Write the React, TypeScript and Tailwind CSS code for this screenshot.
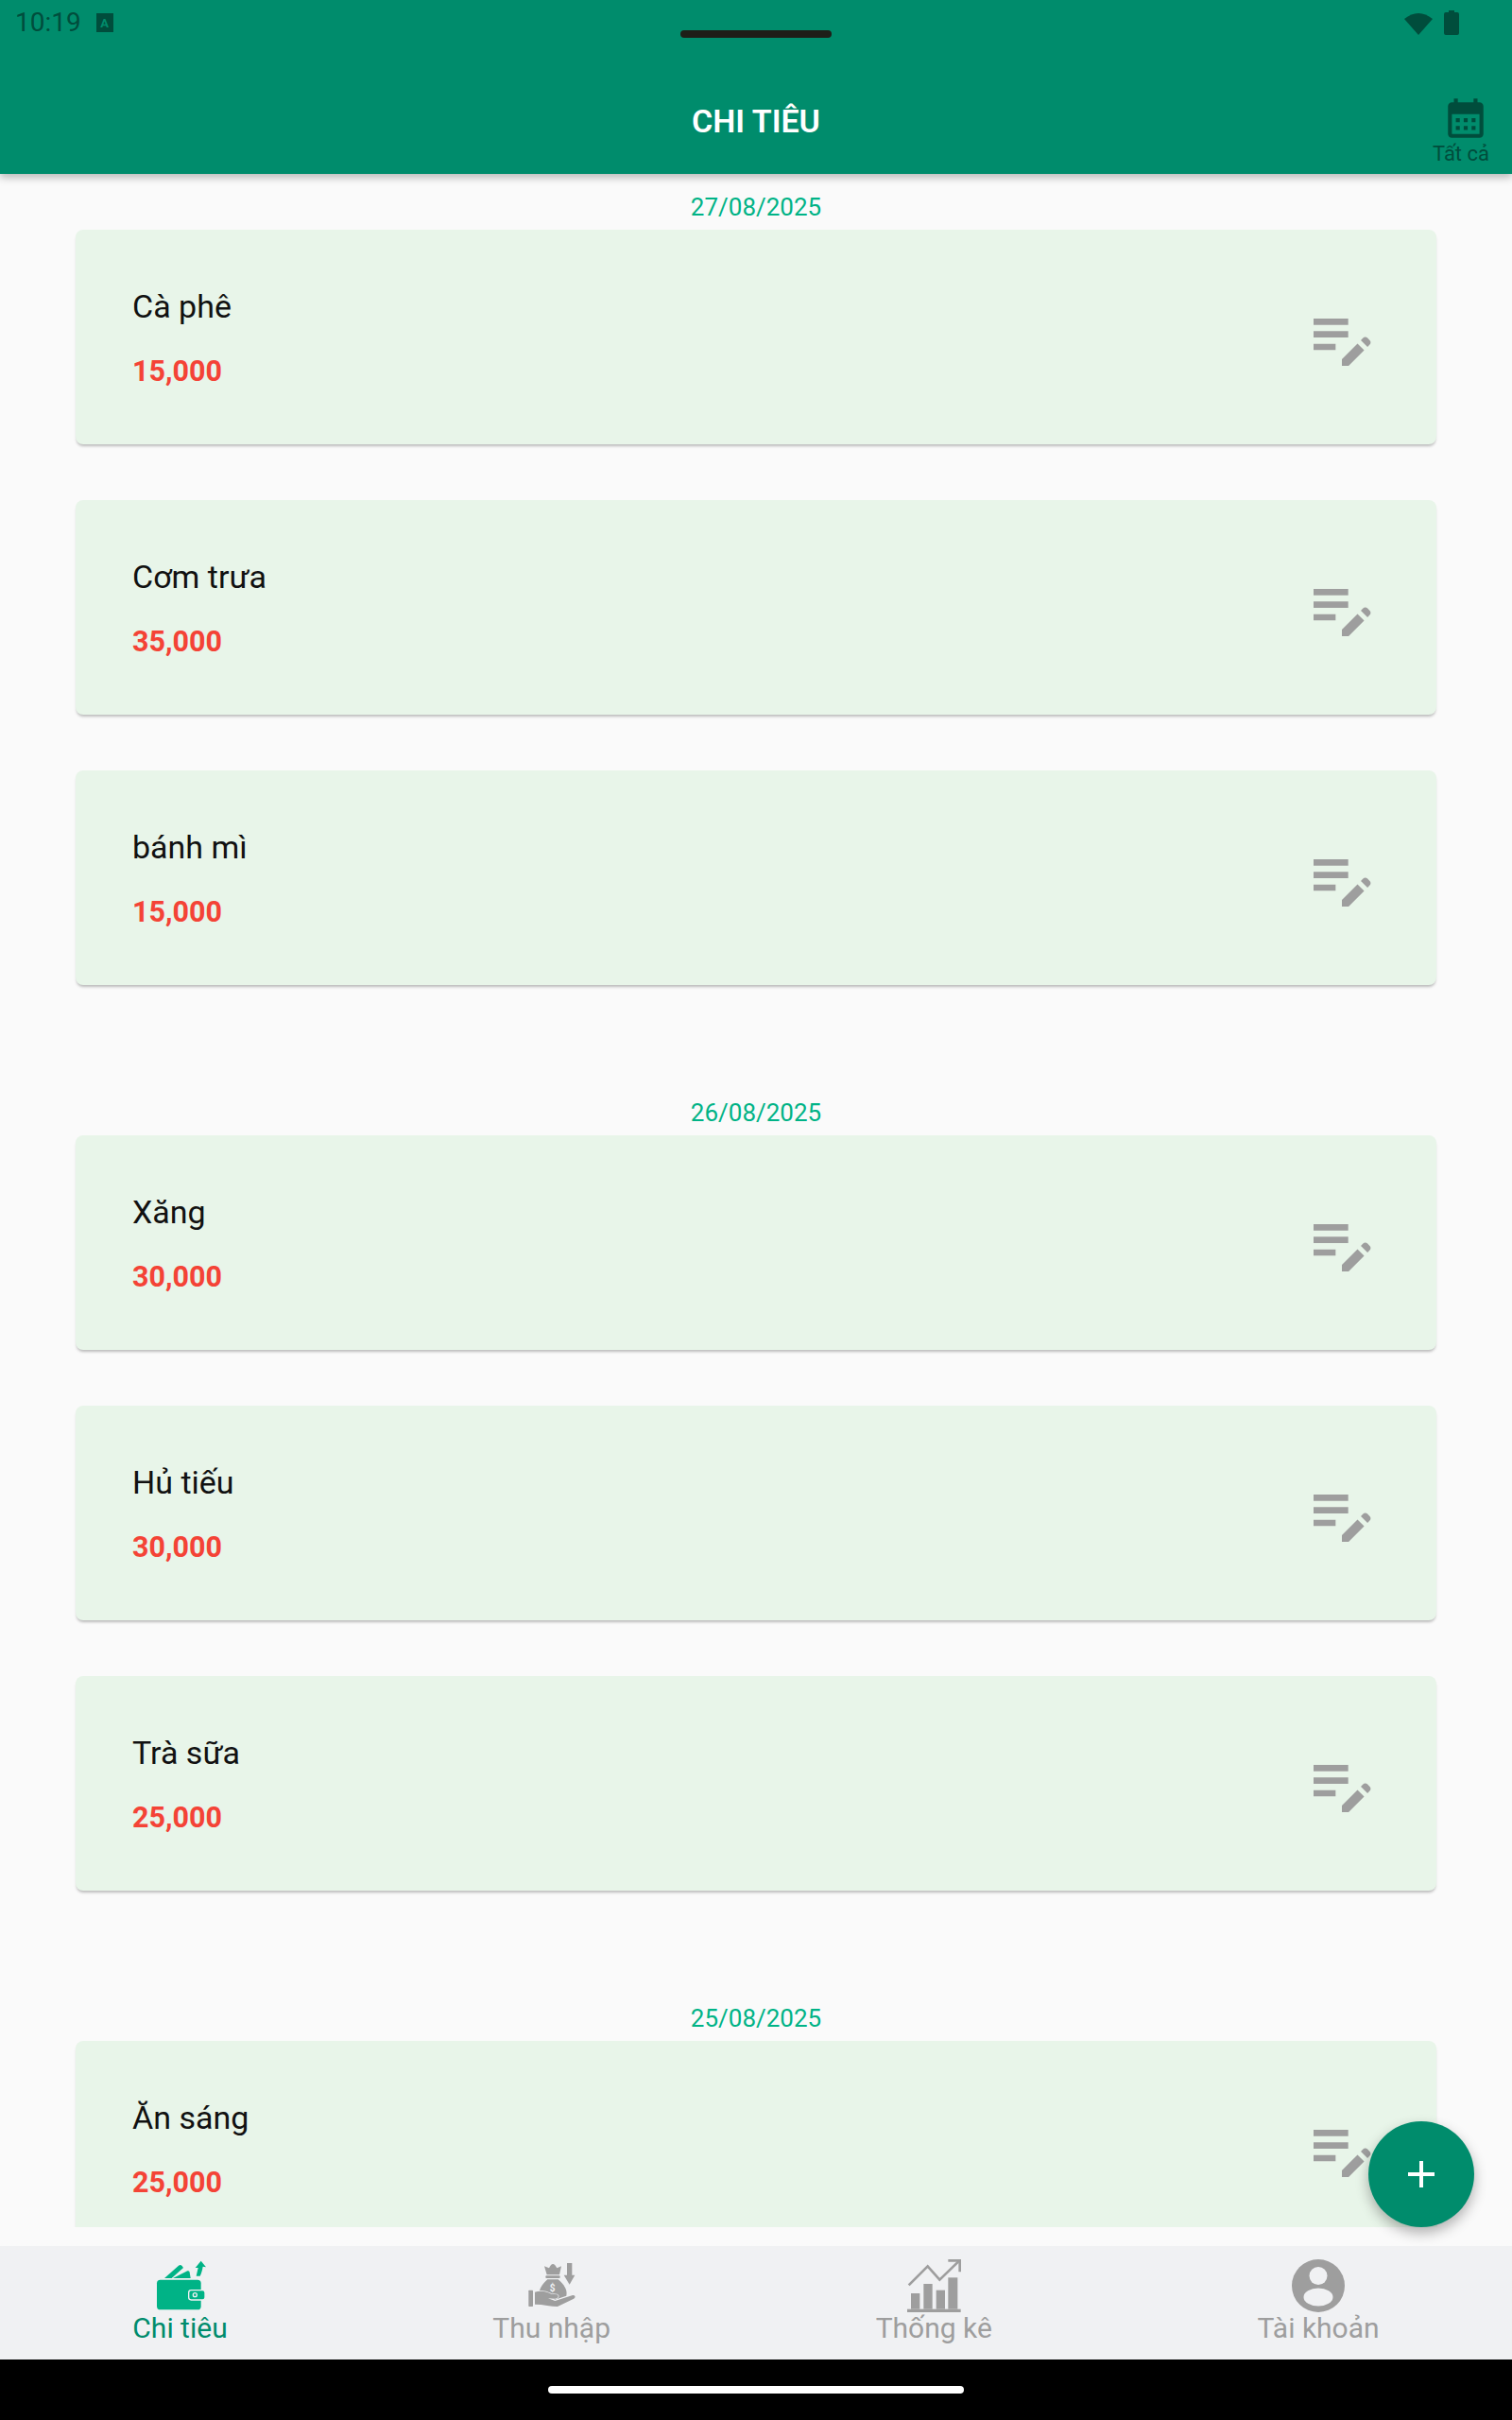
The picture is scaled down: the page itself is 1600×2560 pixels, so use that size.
type Expense = { name: string; amount: string };
type Group = { date: string; items: Expense[] };

const groups: Group[] = [
  {
    date: "27/08/2025",
    items: [
      { name: "Cà phê", amount: "15,000" },
      { name: "Cơm trưa", amount: "35,000" },
      { name: "bánh mì", amount: "15,000" },
    ],
  },
  {
    date: "26/08/2025",
    items: [
      { name: "Xăng", amount: "30,000" },
      { name: "Hủ tiếu", amount: "30,000" },
      { name: "Trà sữa", amount: "25,000" },
    ],
  },
  {
    date: "25/08/2025",
    items: [{ name: "Ăn sáng", amount: "25,000" }],
  },
];

const EditNoteIcon = () => (
  <svg width="80" height="80" viewBox="0 0 24 24" fill="#9e9e9e" className="shrink-0">
    <path d="M3 10h11v2H3v-2zM3 8h11V6H3v2zM3 16h7v-2H3v2zM18.01 12.87l.71-.71c.39-.39 1.02-.39 1.41 0l.71.71c.39.39.39 1.02 0 1.41l-.71.71-2.12-2.12zM16.95 13.93 12 18.88V21h2.12l4.95-4.95-2.12-2.12z" />
  </svg>
);

const CalendarIcon = () => (
  <svg width="50" height="50" viewBox="0 0 24 24" fill="#004d3c" className="ml-[10px]">
    <path d="M19 4h-1V2h-2v2H8V2H6v2H5c-1.1 0-2 .9-2 2v14c0 1.1.9 2 2 2h14c1.1 0 2-.9 2-2V6c0-1.1-.9-2-2-2zm0 16H5V10h14v10zM9 14H7v-2h2v2zm4 0h-2v-2h2v2zm4 0h-2v-2h2v2zm-8 4H7v-2h2v2zm4 0h-2v-2h2v2zm4 0h-2v-2h2v2z" />
  </svg>
);

const WalletIcon = () => (
  <svg width="60" height="60" viewBox="180 90 180 180">
    <path d="M219 150 L264 110 Q270 106 275 111 L279 117 L242 150 Z" fill="#00b386" />
    <path d="M246 150 L292 127 Q298 125 299 131 L302 150 Z" fill="#00b386" />
    <path d="M320 143 L326 117 L317 117 L335 95 L351 115 L341 113 C339 125 336 135 332 143 Z" fill="#00b386" />
    <rect x="195" y="155" width="140" height="95" rx="11" fill="#00b386" />
    <rect x="296" y="188" width="52" height="31" rx="8" fill="#00b386" stroke="#f0f1f3" strokeWidth="4" />
    <circle cx="316" cy="203" r="6" fill="#00b386" stroke="#f0f1f3" strokeWidth="4" />
  </svg>
);

const IncomeIcon = () => (
  <svg width="60" height="60" viewBox="162 90 180 180" fill="#9e9e9e">
    <path d="M300 102 H316 V140 H325 L308 170 L290 140 H300 Z" />
    <path d="M228 112 L243 118 Q255 92 268 118 L282 112 L276 139 L236 139 Z" />
    <rect x="232" y="142" width="46" height="8" rx="3" />
    <path d="M238 154 H272 C290 170 302 186 298 206 L262 218 L212 192 C216 176 226 165 238 154 Z" />
    <text x="254" y="192" fontFamily="Roboto, sans-serif" fontSize="30" fontWeight="700" textAnchor="middle" fill="#f0f1f3">
      $
    </text>
    <rect x="178" y="188" width="14" height="52" rx="2" />
    <path
      d="M198 194 C215 188 235 192 250 200 L268 202 C276 206 272 215 262 215 L240 214 L262 222 L318 204 C328 204 328 212 320 216 L270 240 C250 240 225 233 198 233 Z"
      stroke="#f0f1f3"
      strokeWidth="4"
      paintOrder="stroke"
    />
  </svg>
);

const ChartIcon = () => (
  <svg width="60" height="60" viewBox="174 90 180 180" fill="#9e9e9e">
    <path d="M185 172 L245 112 L283 155 L345 95" fill="none" stroke="#9e9e9e" strokeWidth="8" />
    <path d="M310 94 H347 V130" fill="none" stroke="#9e9e9e" strokeWidth="8" />
    <rect x="192" y="198" width="28" height="50" />
    <rect x="232" y="168" width="28" height="80" />
    <rect x="272" y="188" width="28" height="60" />
    <rect x="310" y="148" width="30" height="100" />
    <rect x="180" y="248" width="170" height="10" />
  </svg>
);

const AccountIcon = () => (
  <svg width="60" height="60" viewBox="0 0 60 60">
    <circle cx="30" cy="28" r="28" fill="#9e9e9e" />
    <circle cx="30" cy="17.5" r="9.5" fill="#f0f1f3" />
    <ellipse cx="30" cy="40" rx="15.5" ry="9.5" fill="#f0f1f3" />
  </svg>
);

const navItems = [
  { label: "Chi tiêu", icon: <WalletIcon />, active: true },
  { label: "Thu nhập", icon: <IncomeIcon />, active: false },
  { label: "Thống kê", icon: <ChartIcon />, active: false },
  { label: "Tài khoản", icon: <AccountIcon />, active: false },
];

const ExpenseCard = ({ name, amount }: Expense) => (
  <div className="flex h-[227px] shrink-0 items-center justify-between rounded-lg bg-[#e8f5e9] px-[60px] shadow-[0_3px_3px_-1px_rgba(0,0,0,0.25)]">
    <div className="flex translate-y-[1px] flex-col gap-[32px]">
      <p className="text-[34px] leading-[38px] text-[#111111]">{name}</p>
      <p className="text-[30.5px] leading-[36px] font-bold text-[#f44336]">{amount}</p>
    </div>
    <EditNoteIcon />
  </div>
);

export default function App() {
  return (
    <div className="relative flex h-[2560px] w-[1600px] flex-col overflow-hidden bg-[#fafafa] font-[Roboto,sans-serif]">
      <header className="relative z-10 h-[184px] shrink-0 bg-[#008c6c] shadow-[0_4px_8px_rgba(0,0,0,0.25)]">
        <div className="flex h-[48px] items-center justify-between pr-[56px] pl-[16px]">
          <div className="flex items-center gap-[16px]">
            <span className="text-[28px] leading-none text-[#004d3c]">10:19</span>
            <span className="flex h-[20px] w-[18px] items-center justify-center bg-[#004d3c] text-[13px] leading-none font-bold text-[#008c6c]">
              A
            </span>
          </div>
          <div className="flex items-center gap-[12px]">
            <svg width="30" height="25" viewBox="0 0 30 25" fill="#004d3c">
              <path d="M0 8 Q15 -4 30 8 L15 25 Z" />
            </svg>
            <svg width="16" height="26" viewBox="0 0 16 26" fill="#004d3c">
              <path d="M5 0 H11 V2 H14 Q16 2 16 4 V24 Q16 26 14 26 H2 Q0 26 0 24 V4 Q0 2 2 2 H5 Z" />
            </svg>
          </div>
        </div>
        <div className="grid h-[136px] grid-cols-[1fr_auto_1fr] items-center pt-[23px]">
          <div />
          <h1 className="text-[34px] leading-none font-semibold text-white">CHI TIÊU</h1>
          <div className="mt-[19px] mr-[24px] flex flex-col items-center justify-self-end">
            <CalendarIcon />
            <span className="translate-y-[1px] text-[22px] leading-[24px] text-[#004d3c]">Tất cả</span>
          </div>
        </div>
      </header>

      <main className="min-h-0 flex-1 pb-[20px]">
        <div className="flex h-full flex-col overflow-hidden px-[80px]">
          {groups.map((group) => (
            <section key={group.date} className="mb-[41px] flex shrink-0 flex-col">
              <div className="h-[59px] pt-[19px] text-center text-[26px] leading-[32px] text-[#00b386]">
                {group.date}
              </div>
              <div className="flex flex-col gap-[59px]">
                {group.items.map((item) => (
                  <ExpenseCard key={item.name} {...item} />
                ))}
              </div>
              <div className="h-[59px]" />
            </section>
          ))}
        </div>
      </main>

      <nav className="flex h-[120px] shrink-0 justify-around bg-[#f0f1f3] pt-[14px]">
        {navItems.map((item) => (
          <div key={item.label} className="flex flex-col items-center">
            {item.icon}
            <span
              className={
                item.active
                  ? "-mt-[3px] text-[30px] leading-[32px] text-[#008c6c]"
                  : "-mt-[3px] text-[30px] leading-[32px] text-[#9e9e9e]"
              }
            >
              {item.label}
            </span>
          </div>
        ))}
      </nav>

      <div className="flex h-[64px] shrink-0 items-center justify-center bg-black">
        <div className="h-[8px] w-[440px] rounded-full bg-white" />
      </div>

      {/* over content */}
      <div className="absolute top-[32px] left-[720px] z-20 h-[8px] w-[160px] rounded-full bg-[#1e1e18]" />
      <button className="absolute top-[2244px] left-[1448px] flex h-[112px] w-[112px] items-center justify-center rounded-full bg-[#008c6c] shadow-[0_6px_14px_rgba(0,0,0,0.3)]">
        <svg width="28" height="28" viewBox="0 0 28 28" fill="white">
          <path d="M12 0h4v12h12v4H16v12h-4V16H0v-4h12z" />
        </svg>
      </button>
    </div>
  );
}
